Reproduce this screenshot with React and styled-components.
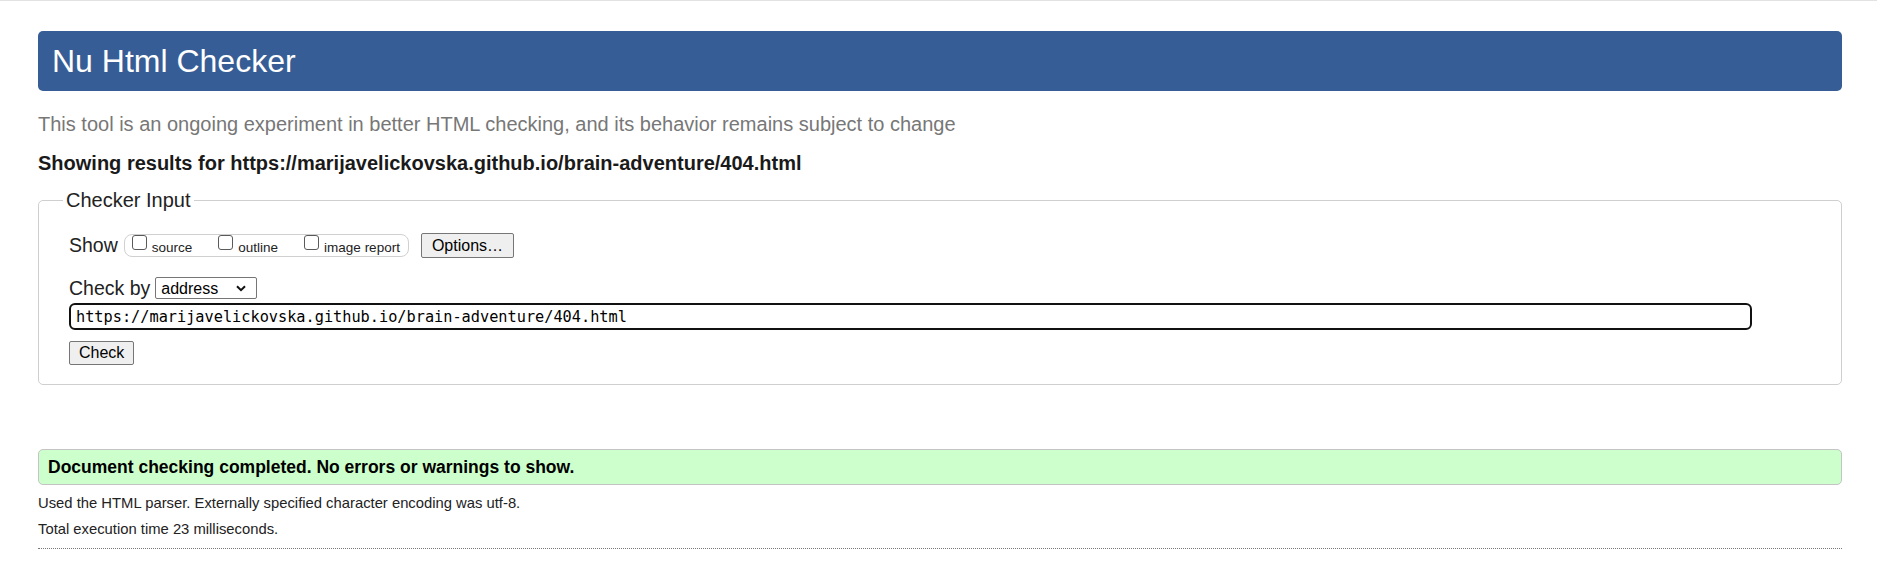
import styled, { createGlobalStyle } from "styled-components";

const GlobalStyle = createGlobalStyle`
  body {
    margin: 0;
    background: #fff;
    color: #222;
    font-family: "Liberation Sans", Arial, sans-serif;
  }
`;

const Page = styled.div`
  border-top: 1px solid #e2e2e2;
  padding: 30px 35px 20px 38px;
`;

const Title = styled.h1`
  margin: 0;
  height: 60px;
  box-sizing: border-box;
  padding: 0 14px;
  display: flex;
  align-items: center;
  background: #365d95;
  color: #fff;
  font-size: 32px;
  font-weight: 400;
  border-radius: 5px;
`;

const Intro = styled.p`
  margin: 22px 0 0;
  font-size: 20px;
  line-height: 23px;
  color: #777;
`;

const Showing = styled.p`
  margin: 16px 0 0;
  font-size: 20px;
  line-height: 23px;
  font-weight: 700;
  color: #1a1a1a;
`;

const Fieldset = styled.fieldset`
  margin: 14px 0 0;
  padding: 21px 24px 19px 24px;
  border: 1px solid #cfcfcf;
  border-radius: 5px;
`;

const Legend = styled.legend`
  padding: 0 3px;
  font-size: 20px;
  line-height: 23px;
`;

const FieldBody = styled.div`
  padding-left: 6px;
`;

const Row = styled.div`
  display: flex;
  align-items: center;
  height: ${(p) => p.$height}px;
  margin-top: ${(p) => p.$top || 0}px;
`;

const RowLabel = styled.span`
  font-size: 19.5px;
  margin-right: ${(p) => p.$gap}px;
`;

const OptionGroup = styled.div`
  display: flex;
  align-items: stretch;
  gap: 26px;
  height: 23px;
  box-sizing: border-box;
  padding: 0 8px 0 7px;
  border: 1px solid #d0d0d0;
  border-radius: 8px;
`;

const CheckItem = styled.label`
  display: flex;
  align-items: flex-start;
  gap: 5px;
  font-size: 13.5px;
  color: #222;
`;

const Checkbox = styled.input`
  appearance: none;
  margin: 0;
  width: 15px;
  height: 15px;
  box-sizing: border-box;
  border: 1px solid #5a5a5a;
  border-radius: 3px;
  background: #fff;
`;

const CheckText = styled.span`
  align-self: center;
  padding-top: 3px;
`;

const Button = styled.button`
  height: ${(p) => p.$height}px;
  padding: 0 ${(p) => p.$pad}px;
  margin-left: ${(p) => p.$left || 0}px;
  background: #efefef;
  border: 1px solid #767676;
  border-radius: 2px;
  font-family: "Liberation Sans", Arial, sans-serif;
  font-size: 16px;
  color: #000;
`;

const SelectBox = styled.div`
  display: flex;
  align-items: center;
  width: 102px;
  height: 22px;
  box-sizing: border-box;
  border: 1px solid #767676;
  border-radius: 2px;
  background: #fff;
  padding-right: 10px;
`;

const Select = styled.select`
  appearance: none;
  flex: 1;
  min-width: 0;
  border: none;
  outline: none;
  background: transparent;
  padding: 0 0 0 5px;
  font-family: "Liberation Sans", Arial, sans-serif;
  font-size: 16px;
  color: #000;
`;

const UrlInput = styled.input`
  display: block;
  margin-top: 4px;
  width: calc(100% - 65px);
  height: 27px;
  box-sizing: border-box;
  border: 2px solid #111;
  border-radius: 6px;
  padding: 0 5px;
  outline: none;
  font-family: "DejaVu Sans Mono", "Liberation Mono", monospace;
  font-size: 15.25px;
  color: #000;
`;

const Success = styled.div`
  margin-top: 64px;
  height: 36px;
  box-sizing: border-box;
  display: flex;
  align-items: center;
  padding: 0 9px;
  background: #ccffcc;
  border: 1px solid #c4c4c4;
  border-radius: 5px;
  font-size: 17.5px;
  font-weight: 700;
  color: #000;
`;

const Note = styled.p`
  margin: ${(p) => p.$top}px 0 0;
  font-size: 14.8px;
  line-height: 17px;
  color: #222;
`;

const Rule = styled.hr`
  margin: 10px 0 0;
  border: none;
  border-top: 1px dotted #777;
`;

function Chevron() {
  return (
    <svg width="10" height="7" viewBox="0 0 10 7">
      <path d="M1 1.2 L5 5.2 L9 1.2" fill="none" stroke="#111" strokeWidth="2" />
    </svg>
  );
}

const url = "https://marijavelickovska.github.io/brain-adventure/404.html";

export default function App() {
  return (
    <>
      <GlobalStyle />
      <Page>
        <Title>Nu Html Checker</Title>
        <Intro>
          This tool is an ongoing experiment in better HTML checking, and its behavior remains
          subject to change
        </Intro>
        <Showing>Showing results for {url}</Showing>

        <Fieldset>
          <Legend>Checker Input</Legend>
          <FieldBody>
            <Row $height={25}>
              <RowLabel $gap={6}>Show</RowLabel>
              <OptionGroup>
                {["source", "outline", "image report"].map((name) => (
                  <CheckItem key={name}>
                    <Checkbox type="checkbox" />
                    <CheckText>{name}</CheckText>
                  </CheckItem>
                ))}
              </OptionGroup>
              <Button $height={25} $pad={10} $left={12}>
                Options…
              </Button>
            </Row>
            <Row $height={22} $top={19}>
              <RowLabel $gap={5}>Check by</RowLabel>
              <SelectBox>
                <Select defaultValue="address">
                  <option value="address">address</option>
                  <option value="upload">file upload</option>
                  <option value="text">text input</option>
                </Select>
                <Chevron />
              </SelectBox>
            </Row>
            <UrlInput type="url" defaultValue={url} />
            <Row $height={24} $top={11}>
              <Button $height={24} $pad={9}>
                Check
              </Button>
            </Row>
          </FieldBody>
        </Fieldset>

        <Success>Document checking completed. No errors or warnings to show.</Success>
        <Note $top={10}>
          Used the HTML parser. Externally specified character encoding was utf-8.
        </Note>
        <Note $top={9}>Total execution time 23 milliseconds.</Note>
        <Rule />
      </Page>
    </>
  );
}
